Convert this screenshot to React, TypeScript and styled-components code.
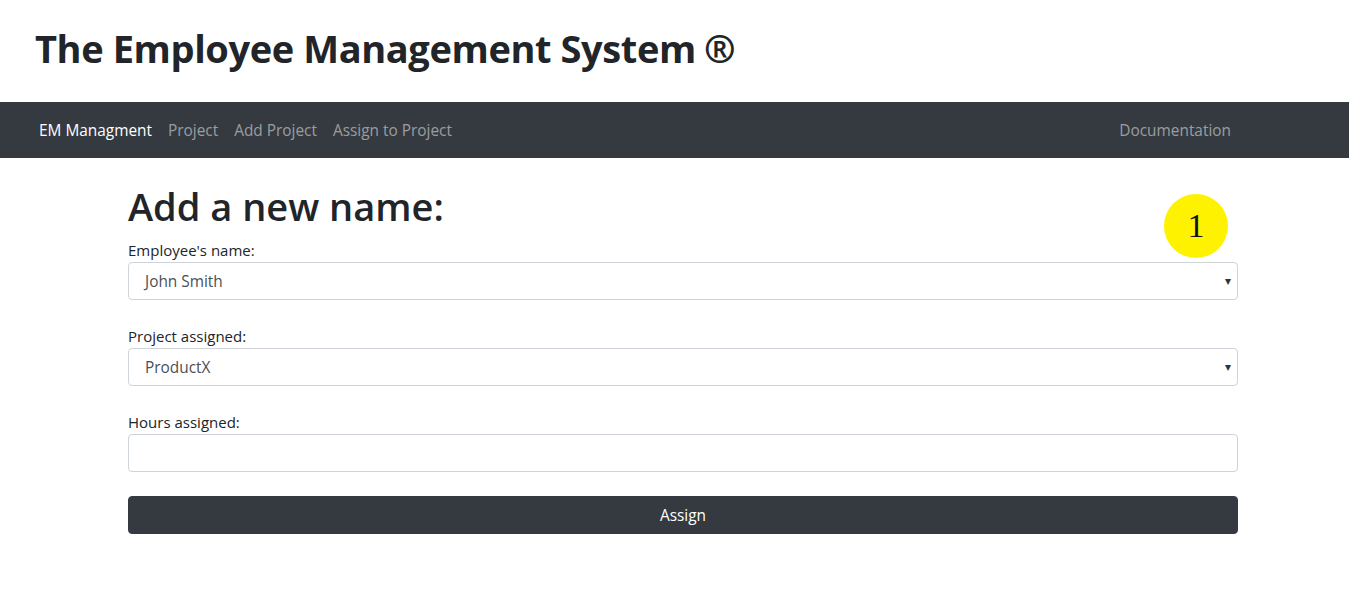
import styled, { createGlobalStyle } from 'styled-components';

const GlobalStyle = createGlobalStyle`
  * { box-sizing: border-box; }
  body {
    margin: 0;
    background: #fff;
    color: #212529;
    font-family: 'Open Sans', 'Noto Sans', sans-serif;
  }
`;

const navLinks = ['Project', 'Add Project', 'Assign to Project'];

const fields = [
  { label: "Employee's name:", value: 'John Smith', select: true },
  { label: 'Project assigned:', value: 'ProductX', select: true },
  { label: 'Hours assigned:', value: '', select: false },
];

export default function App() {
  return (
    <>
      <GlobalStyle />
      <Header>
        <Title>
          The Employee Management System<Registered>®</Registered>
        </Title>
      </Header>
      <Navbar>
        <NavLeft>
          <Brand>EM Managment</Brand>
          {navLinks.map((link) => (
            <NavLink key={link}>{link}</NavLink>
          ))}
        </NavLeft>
        <NavLink>Documentation</NavLink>
      </Navbar>
      <Container>
        <Badge>1</Badge>
        <Heading>Add a new name:</Heading>
        {fields.map((field) => (
          <FormGroup key={field.label}>
            <Label>{field.label}</Label>
            <Control>
              {field.value}
              {field.select && <Caret>▾</Caret>}
            </Control>
          </FormGroup>
        ))}
        <SubmitButton>Assign</SubmitButton>
      </Container>
    </>
  );
}

const Header = styled.header`
  height: 102px;
  padding: 24px 35px 0;
`;

const Title = styled.h1`
  margin: 0;
  font-size: 38px;
  line-height: 48px;
  font-weight: 700;
  letter-spacing: -0.4px;
  color: #212529;
`;

const Registered = styled.span`
  margin-left: 8px;
`;

const Navbar = styled.nav`
  height: 56px;
  background: #343a40;
  display: flex;
  align-items: center;
  justify-content: space-between;
  padding: 0 118px 0 39px;
`;

const NavLeft = styled.div`
  display: flex;
  align-items: center;
  gap: 16px;
`;

const Brand = styled.span`
  color: #fff;
  font-size: 15.4px;
`;

const NavLink = styled.span`
  color: rgba(255, 255, 255, 0.5);
  font-size: 15.4px;
`;

const Container = styled.main`
  position: relative;
  margin: 0 111px 0 128px;
  padding-top: 24px;
`;

const Badge = styled.div`
  position: absolute;
  top: 36px;
  right: 10px;
  width: 64px;
  height: 64px;
  border-radius: 50%;
  background: #fff200;
  display: flex;
  align-items: center;
  justify-content: center;
  font-family: 'Liberation Serif', serif;
  font-size: 34px;
  color: #111;
`;

const Heading = styled.h2`
  margin: 0 0 8px;
  font-size: 38px;
  line-height: 48px;
  font-weight: 600;
  color: #212529;
`;

const FormGroup = styled.div`
  margin-bottom: 24px;
`;

const Label = styled.label`
  display: block;
  font-size: 15px;
  line-height: 24px;
  color: #212529;
`;

const Control = styled.div`
  position: relative;
  height: 38px;
  border: 1px solid #ced4da;
  border-radius: 4px;
  padding: 0 16px;
  display: flex;
  align-items: center;
  font-size: 15.4px;
  color: #495057;
`;

const Caret = styled.span`
  position: absolute;
  right: 6px;
  top: 9px;
  font-size: 12px;
  color: #333;
`;

const SubmitButton = styled.button`
  display: block;
  width: 100%;
  height: 38px;
  border: 1px solid #343a40;
  border-radius: 4px;
  background: #343a40;
  color: #fff;
  font-family: inherit;
  font-size: 15.4px;
`;
